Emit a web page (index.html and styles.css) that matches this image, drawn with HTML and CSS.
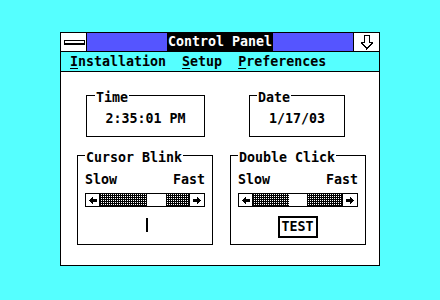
FILE: index.html
```html
<!DOCTYPE html>
<html lang="en">
  <head>
    <meta charset="UTF-8" />
    <title>Control Panel</title>
    <link rel="stylesheet" href="styles.css">
  </head>
  <body>
    <div class="window">
      <div class="titlebar">
        <div class="sysbox"><span class="sysbar"></span></div>
        <div class="caption"><span class="caption-text">Control Panel</span></div>
        <div class="sizebox">
          <svg width="12" height="15" viewBox="0 0 12 15">
            <polygon points="3.5,0.5 8.5,0.5 8.5,7.5 11.5,7.5 6,14 0.5,7.5 3.5,7.5" fill="#fff" stroke="#000" stroke-width="1.4" />
          </svg>
        </div>
      </div>
      <div class="menubar">
        <span><u>I</u>nstallation</span>
        <span><u>S</u>etup</span>
        <span><u>P</u>references</span>
      </div>
      <div class="client">
        <div class="row row-top">
          <div class="group group-time">
            <span class="label">Time</span>
            <span class="value">2:35:01 PM</span>
          </div>
          <div class="group group-date">
            <span class="label">Date</span>
            <span class="value">1/17/03</span>
          </div>
        </div>
        <div class="row row-bottom">
          <div class="group group-slider">
            <span class="label">Cursor Blink</span>
            <div class="ends"><span>Slow</span><span>Fast</span></div>
            <div class="scroll">
              <div class="arrow arrow-left">
                <svg width="8" height="7" viewBox="0 0 8 7"><polygon points="0,3.5 4,0 4,2 8,2 8,5 4,5 4,7" /></svg>
              </div>
              <div class="track" style="width: 47px"></div>
              <div class="thumb" style="width: 19px"></div>
              <div class="track" style="width: 23px"></div>
              <div class="arrow arrow-right">
                <svg width="8" height="7" viewBox="0 0 8 7"><polygon points="8,3.5 4,0 4,2 0,2 0,5 4,5 4,7" /></svg>
              </div>
            </div>
            <span class="caret"></span>
          </div>
          <div class="group group-slider">
            <span class="label">Double Click</span>
            <div class="ends"><span>Slow</span><span>Fast</span></div>
            <div class="scroll">
              <div class="arrow arrow-left">
                <svg width="8" height="7" viewBox="0 0 8 7"><polygon points="0,3.5 4,0 4,2 8,2 8,5 4,5 4,7" /></svg>
              </div>
              <div class="track" style="width: 36px"></div>
              <div class="thumb" style="width: 18px"></div>
              <div class="track" style="width: 35px"></div>
              <div class="arrow arrow-right">
                <svg width="8" height="7" viewBox="0 0 8 7"><polygon points="8,3.5 4,0 4,2 0,2 0,5 4,5 4,7" /></svg>
              </div>
            </div>
            <span class="button">TEST</span>
          </div>
        </div>
      </div>
    </div>
  </body>
</html>
```
FILE: styles.css
```css
* {
  margin: 0;
  padding: 0;
  box-sizing: border-box;
}
html,
body {
  width: 100%;
  height: 100%;
  overflow: hidden;
}
body {
  background-color: #55ffff;
  color: #000;
  font-family: 'DejaVu Sans Mono', 'Liberation Mono', monospace;
  font-size: 13.3px;
  font-weight: bold;
  line-height: 14px;
}
svg {
  display: block;
  shape-rendering: crispEdges;
}
.window {
  width: 320px;
  height: 234px;
  margin: 32px 0 0 60px;
  border: 1px solid #000;
  background-color: #fff;
  display: flex;
  flex-direction: column;
}
/* 标题栏 */
.titlebar {
  display: flex;
  height: 19px;
  border-bottom: 1px solid #000;
  background-color: #5555ff;
}
.sysbox {
  width: 26px;
  border-right: 1px solid #000;
  background-color: #fff;
  display: flex;
  align-items: center;
  justify-content: center;
}
.sysbar {
  width: 21px;
  height: 5px;
  border: 1px solid #000;
  border-bottom-width: 2px;
  background-color: #fff;
  margin-left: 1px;
}
.caption {
  flex: 1;
  display: flex;
  justify-content: center;
}
.caption-text {
  background-color: #000;
  color: #fff;
  padding: 0 1px;
  line-height: 18px;
}
.sizebox {
  width: 26px;
  border-left: 1px solid #000;
  background-color: #fff;
  display: flex;
  align-items: center;
  justify-content: center;
}
/* 菜单栏 */
.menubar {
  display: flex;
  gap: 16px;
  height: 20px;
  padding: 3px 0 0 9px;
  border-bottom: 1px solid #000;
  background-color: #55ffff;
}
.menubar u {
  text-underline-offset: 2px;
  text-decoration-thickness: 1px;
}
.client {
  flex: 1;
}
.row {
  display: flex;
}
.row-top {
  gap: 44px;
  margin: 23px 0 0 25px;
}
.row-bottom {
  gap: 17px;
  margin: 18px 0 0 16px;
}
/* 分组框 */
.group {
  position: relative;
  border: 1px solid #000;
  display: flex;
  flex-direction: column;
}
.label {
  position: absolute;
  top: -5px;
  left: 7px;
  padding: 0 1px;
  background-color: #fff;
}
.group-time,
.group-date {
  height: 42px;
  align-items: center;
  justify-content: center;
  padding-top: 5px;
}
.group-time {
  width: 119px;
}
.group-time .label {
  left: 8px;
}
.group-date {
  width: 96px;
}
.group-slider {
  width: 136px;
  height: 90px;
  padding: 17px 7px 0;
}
.ends {
  display: flex;
  justify-content: space-between;
}
/* 滚动条 */
.scroll {
  display: flex;
  height: 14px;
  margin-top: 6px;
  border: 1px solid #000;
}
.arrow {
  display: flex;
  align-items: center;
  justify-content: center;
}
.arrow-left {
  width: 14px;
  border-right: 1px solid #000;
}
.arrow-right {
  width: 15px;
  border-left: 1px solid #000;
}
/* 点阵灰 */
.track {
  background: #000 conic-gradient(#fff 0 25%, #000 0) 0 0 / 2px 2px;
}
.thumb {
  background-color: #fff;
}
.caret {
  align-self: center;
  width: 2px;
  height: 14px;
  margin: 11px 0 0 3px;
  background-color: #000;
}
.button {
  align-self: center;
  width: 40px;
  height: 22px;
  margin: 9px 1px 0 0;
  border: 2px solid #000;
  text-align: center;
  line-height: 18px;
}
```
